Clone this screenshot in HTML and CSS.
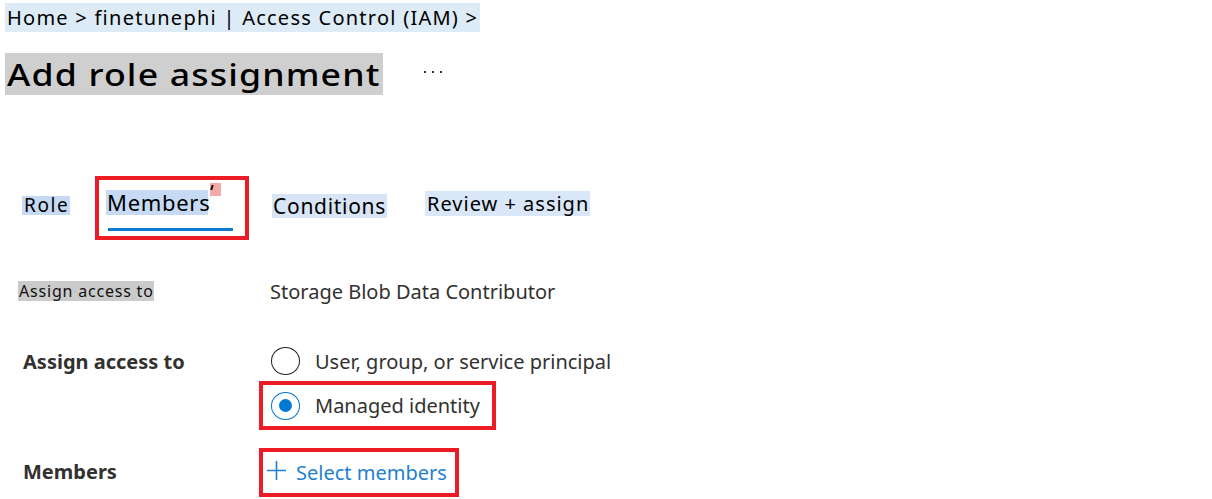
FILE: index.html
```html
<!DOCTYPE html>
<html>
<head>
<meta charset="utf-8">
<link rel="stylesheet" href="styles.css">
</head>
<body>
<div class="page">
  <div class="crumbs"><span class="crumb-bg">Home &gt; finetunephi | Access Control (IAM) &gt;</span></div>
  <div class="title-row">
    <h1 class="title"><span class="title-text">Add role assignment</span></h1>
    <span class="more" aria-label="More"><i></i><i></i><i></i></span>
  </div>
  <nav class="tabs">
    <span class="tab tab-role">Role</span>
    <div class="tab-box">
      <span class="tab tab-members">Members</span>
      <span class="underline"></span>
      <span class="pink"><span class="tick"></span></span>
    </div>
    <span class="tab tab-cond">Conditions</span>
    <span class="tab tab-review">Review + assign</span>
  </nav>
  <div class="form">
    <div class="label-small"><span>Assign access to</span></div>
    <div class="value value-text">Storage Blob Data Contributor</div>

    <div class="label-bold label-access">Assign access to</div>
    <div class="value options">
      <div class="option">
        <span class="radio"></span>
        <span>User, group, or service principal</span>
      </div>
      <div class="option option-boxed">
        <span class="radio radio-on"><span class="dot"></span></span>
        <span>Managed identity</span>
      </div>
    </div>

    <div class="label-bold label-members">Members</div>
    <div class="value">
      <div class="select-box">
        <svg class="plus" width="23" height="19" viewBox="0 0 23 19"><path d="M11.5 0v19M2 9.5h19" stroke="#1f7fd4" stroke-width="1.6" fill="none"/></svg>
        <span class="select-text">Select members</span>
      </div>
    </div>
  </div>
</div>
</body>
</html>
```

FILE: styles.css
```css
* { box-sizing: border-box; }
body {
  margin: 0;
  background: #fff;
  font-family: "Noto Sans", "Open Sans", sans-serif;
  color: #000;
}
.page { width: 1212px; height: 499px; overflow: hidden; }

.crumbs { padding: 3px 0 0 5px; height: 32px; }
.crumb-bg {
  display: inline-block;
  background: #ddebf7;
  height: 29px;
  width: 475px;
  padding-left: 2px;
  font-size: 20px;
  letter-spacing: 1.25px;
  line-height: 30px;
  white-space: nowrap;
  overflow: hidden;
}

.title-row {
  display: flex;
  align-items: flex-start;
  margin-top: 21px;
  padding-left: 5px;
  height: 42px;
}
.title {
  margin: 0;
  background: #cfcfcf;
  width: 378px;
  height: 42px;
  padding-left: 2px;
  font-weight: 500;
  font-size: 31px;
  line-height: 42px;
  white-space: nowrap;
}
.title-text {
  display: inline-block;
  letter-spacing: 1px;
  transform: scaleX(1.15);
  transform-origin: left center;
}
.more {
  display: flex;
  gap: 6px;
  margin-left: 41px;
  margin-top: 18px;
}
.more i {
  display: block;
  width: 2px;
  height: 2px;
  background: #333;
}

.tabs {
  display: flex;
  align-items: flex-start;
  margin-top: 81px;
  height: 64px;
}
.tab { white-space: nowrap; }
.tab-role {
  margin-left: 22px;
  margin-top: 20px;
  background: #c6daf3;
  font-size: 19px;
  letter-spacing: 1.6px;
  line-height: 19px;
  height: 19px;
  width: 48px;
  padding-left: 2px;
}
.tab-box {
  position: relative;
  margin-left: 25px;
  width: 154px;
  height: 64px;
  border: 4px solid #ed1c24;
  padding: 10px 0 0 7px;
  display: flex;
  flex-direction: column;
  align-items: flex-start;
}
.tab-members {
  background: #c6daf3;
  font-size: 22px;
  letter-spacing: 0.7px;
  line-height: 25px;
  height: 25px;
  width: 102px;
  padding-left: 1px;
}
.underline {
  display: block;
  margin-top: 13px;
  margin-left: 2px;
  width: 125px;
  height: 3px;
  background: #0e7ad0;
}
.pink {
  position: absolute;
  left: 111px;
  top: 3px;
  width: 11px;
  height: 13px;
  background: #f6a9a9;
}
.tick {
  position: absolute;
  left: 1px;
  top: 2px;
  width: 2px;
  height: 5px;
  background: #111;
  transform: skewX(-15deg);
}
.tab-cond {
  margin-left: 23px;
  margin-top: 18px;
  background: #d7e5f7;
  font-size: 21px;
  letter-spacing: 0.7px;
  line-height: 24px;
  height: 24px;
  padding-left: 1px;
  width: 115px;
}
.tab-review {
  margin-left: 38px;
  margin-top: 15px;
  background: #dae7f8;
  font-size: 20px;
  letter-spacing: 1px;
  line-height: 25px;
  height: 25px;
  width: 165px;
  padding-left: 2px;
}

.form {
  display: grid;
  grid-template-columns: 259px 1fr;
  margin-top: 41px;
  color: #323130;
}
.label-small {
  padding-left: 18px;
  height: 40px;
}
.label-small span {
  display: inline-block;
  background: #cbcbcb;
  color: #111;
  font-size: 16px;
  letter-spacing: 0.8px;
  line-height: 20px;
  height: 20px;
  width: 136px;
  padding-left: 1px;
  white-space: nowrap;
  overflow: hidden;
}
.value-text {
  padding-left: 11px;
  padding-top: 1px;
  font-size: 20px;
  line-height: 20px;
}
.label-bold {
  padding-left: 23px;
  font-weight: 700;
  font-size: 20px;
}
.label-access { padding-top: 29px; line-height: 24px; }
.options { padding-top: 25px; }
.option {
  display: flex;
  align-items: center;
  gap: 15px;
  font-size: 20px;
  height: 30px;
  padding-left: 12px;
}
.option-boxed {
  margin-top: 5px;
  width: 237px;
  height: 49px;
  border: 4px solid #ed1c24;
  padding-left: 8px;
}
.radio {
  width: 29px;
  height: 28px;
  border: 1.5px solid #222;
  border-radius: 50%;
  display: flex;
  align-items: center;
  justify-content: center;
  flex: none;
}
.radio-on { border-color: #0078d4; }
.dot {
  width: 13px;
  height: 13px;
  border-radius: 50%;
  background: #0078d4;
}
.label-members { padding-top: 30px; line-height: 24px; }
.value .select-box {
  margin-top: 18px;
  width: 200px;
  height: 49px;
  border: 4px solid #ed1c24;
  display: flex;
  align-items: center;
  padding-left: 2px;
  gap: 8px;
  color: #1f7fd4;
  font-size: 20px;
}
.plus { margin-top: -4px; }
```
